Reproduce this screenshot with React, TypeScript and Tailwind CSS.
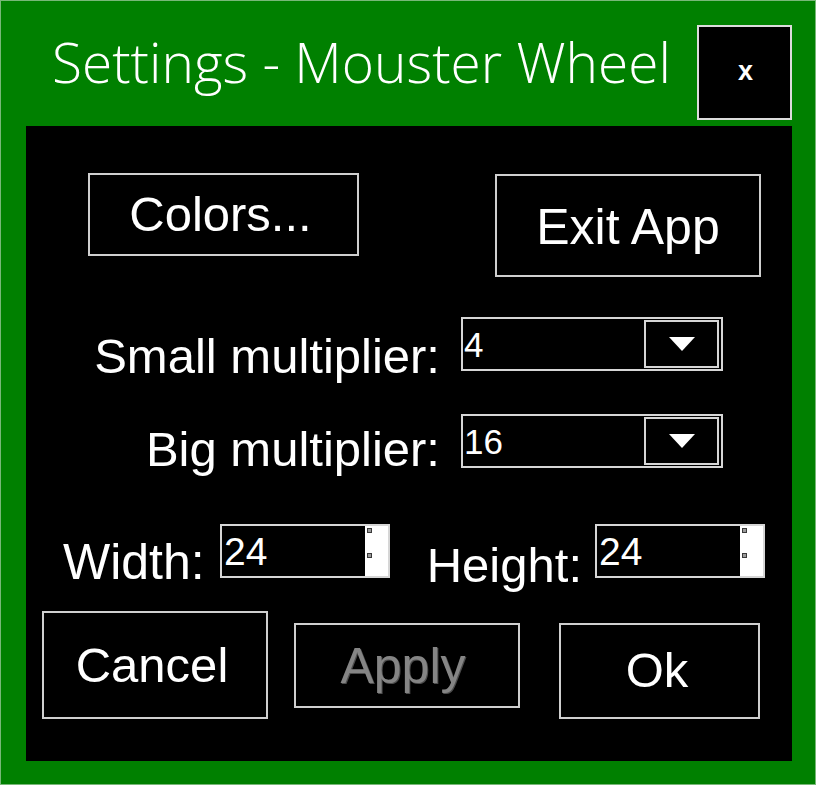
import React from "react";

function OutlineButton({
  label,
  className,
  disabled,
}: {
  label: string;
  className: string;
  disabled?: boolean;
}) {
  return (
    <button
      type="button"
      className={
        "flex shrink-0 items-center justify-center border-2 border-[#cfcfcf] bg-black leading-none " +
        (disabled
          ? "text-[#858585] [text-shadow:1px_1px_0_rgba(255,255,255,0.3)] "
          : "text-white ") +
        className
      }
    >
      {label}
    </button>
  );
}

function Dropdown({ value }: { value: string }) {
  return (
    <div className="ml-[21px] flex h-[54px] w-[262px] shrink-0 border-2 border-[#d6d6d6] bg-black">
      <div className="flex flex-1 items-center pl-[1px] text-[35px] leading-none text-white">
        {value}
      </div>
      <div className="mb-[1px] mr-[2px] mt-[1px] flex w-[75px] items-center justify-center border-2 border-[#d6d6d6] bg-black">
        <svg width="26" height="14" viewBox="0 0 26 14">
          <polygon points="0,0 26,0 13,14" fill="#ffffff" />
        </svg>
      </div>
    </div>
  );
}

function SpinBox({ value }: { value: string }) {
  return (
    <div className="flex h-[54px] w-[170px] shrink-0 border-2 border-[#d6d6d6] bg-black">
      <div className="flex flex-1 items-center pl-[2px] text-[39px] leading-none text-white">
        {value}
      </div>
      <div className="flex w-[23px] flex-col gap-[20px] bg-white pl-[2px] pt-[2px]">
        <div className="h-[5px] w-[5px] border border-[#3a3a3a] bg-[#9a9a9a]" />
        <div className="h-[5px] w-[5px] border border-[#3a3a3a] bg-[#9a9a9a]" />
      </div>
    </div>
  );
}

export default function App() {
  return (
    <div className="h-[787px] w-[818px] bg-white font-['Liberation_Sans',Arial,sans-serif]">
      <div className="flex h-[785px] w-[816px] flex-col border border-[#78b878] bg-[#008000] pb-[23px] pl-[25px] pr-[23px]">
        {/* title bar */}
        <div className="flex h-[125px] shrink-0 items-start justify-between">
          <div className="whitespace-nowrap pl-[26px] pt-[33px] font-['Open_Sans',sans-serif] text-[55px] font-light leading-[55px] text-white">
            Settings - Mouster Wheel
          </div>
          <button
            type="button"
            className="mt-[24px] flex h-[95px] w-[95px] shrink-0 items-center justify-center border-2 border-[#dcdcdc] bg-black pb-[2px] pl-[2px] text-[27px] font-bold leading-none text-white"
          >
            x
          </button>
        </div>

        {/* settings panel */}
        <div className="flex flex-1 flex-col bg-black">
          <div className="mt-[47px] flex items-start">
            <OutlineButton label="Colors..." className="ml-[62px] h-[83px] w-[271px] pr-[6px] text-[49px]" />
            <OutlineButton label="Exit App" className="ml-[136px] mt-[1px] h-[103px] w-[266px] pt-[2px] text-[50px]" />
          </div>

          <div className="mt-[40px] flex h-[54px]">
            <div className="w-[414px] shrink-0 pt-[15px] text-right text-[49px] leading-[48px] text-white">
              Small multiplier:
            </div>
            <Dropdown value="4" />
          </div>

          <div className="mt-[43px] flex h-[54px]">
            <div className="w-[414px] shrink-0 pt-[11px] text-right text-[49px] leading-[48px] text-white">
              Big multiplier:
            </div>
            <Dropdown value="16" />
          </div>

          <div className="mt-[56px] flex h-[54px]">
            <div className="ml-[37px] w-[157px] shrink-0 pt-[14px] text-[50px] leading-[48px] text-white">
              Width:
            </div>
            <SpinBox value="24" />
            <div className="w-[205px] shrink-0 pr-[13px] pt-[17px] text-right text-[49px] leading-[48px] text-white">
              Height:
            </div>
            <SpinBox value="24" />
          </div>

          <div className="mt-[33px] flex items-start">
            <OutlineButton label="Cancel" className="ml-[16px] h-[108px] w-[226px] pr-[6px] text-[49px]" />
            <OutlineButton label="Apply" disabled className="ml-[26px] mt-[12px] h-[85px] w-[226px] pr-[8px] text-[50px]" />
            <OutlineButton label="Ok" className="ml-[39px] mt-[12px] h-[96px] w-[201px] pr-[5px] pb-[2px] text-[49px]" />
          </div>
        </div>
      </div>
    </div>
  );
}
